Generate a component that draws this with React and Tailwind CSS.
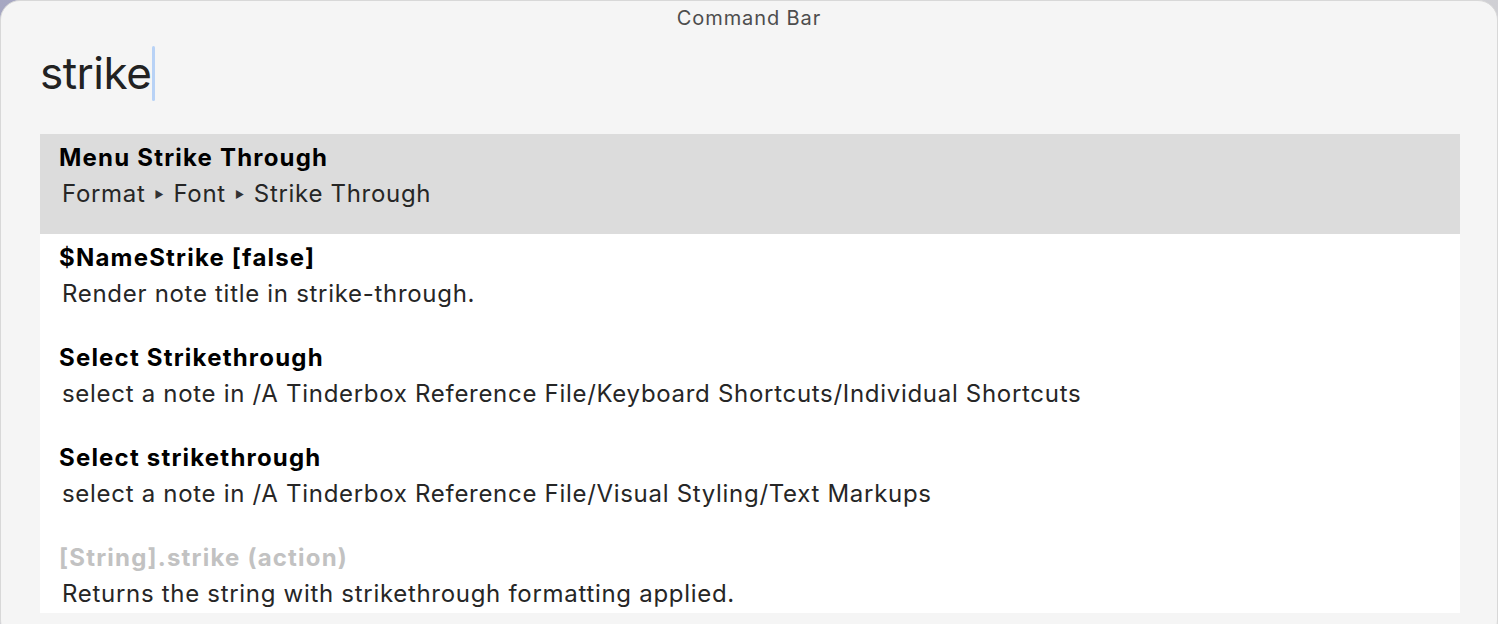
import React from "react";

const Tri = () => <span className="text-[10px] relative top-[-4px] mx-[9px] text-[#333]">▶</span>;

const items = [
  { title: "Menu Strike Through", sub: <>Format<Tri />Font<Tri />Strike Through</>, active: true },
  { title: "$NameStrike [false]", sub: "Render note title in strike-through." },
  { title: "Select Strikethrough", sub: "select a note in /A Tinderbox Reference File/Keyboard Shortcuts/Individual Shortcuts" },
  { title: "Select strikethrough", sub: "select a note in /A Tinderbox Reference File/Visual Styling/Text Markups" },
  { title: "[String].strike (action)", sub: "Returns the string with strikethrough formatting applied.", dim: true },
];

export default function App() {
  return (
    <div className="w-[1498px] h-[624px] overflow-hidden bg-[linear-gradient(135deg,#a6a7c2_0%,#c9c9d2_40%,#d6d6d6_100%)]" style={{ fontFamily: "Inter, 'Noto Sans', sans-serif" }}>
      <div className="w-[1498px] h-[640px] rounded-[20px] bg-[#f5f5f5] border border-[#d8d8d8] flex flex-col">
        <div className="h-[36px] flex items-center justify-center text-[20px] text-[#4d4d4d] tracking-[0.9px] pb-[3px]">
          Command Bar
        </div>
        <div className="h-[97px] flex items-start pt-[9px] pl-[39px]">
          <span className="text-[44px] text-[#222] tracking-[-0.5px] leading-[55px]">strike</span>
          <span className="w-[3px] h-[55px] bg-[#b8d2f6] rounded-full ml-[1px]" />
        </div>
        <div className="ml-[39px] mr-[37px] bg-white flex flex-col h-[479px] overflow-hidden">
          {items.map((it, i) => (
            <div key={i} className={`h-[100px] shrink-0 pt-[9px] pl-[19px] ${it.active ? "bg-[#dcdcdc]" : ""}`}>
              <div className={`text-[24px] font-bold leading-[30px] tracking-[1.2px] ${it.dim ? "text-[#c2c2c2]" : "text-black"}`}>{it.title}</div>
              <div className="text-[24px] leading-[30px] text-[#262626] mt-[6px] pl-[3px] tracking-[0.7px]">{it.sub}</div>
            </div>
          ))}
        </div>
      </div>
    </div>
  );
}
